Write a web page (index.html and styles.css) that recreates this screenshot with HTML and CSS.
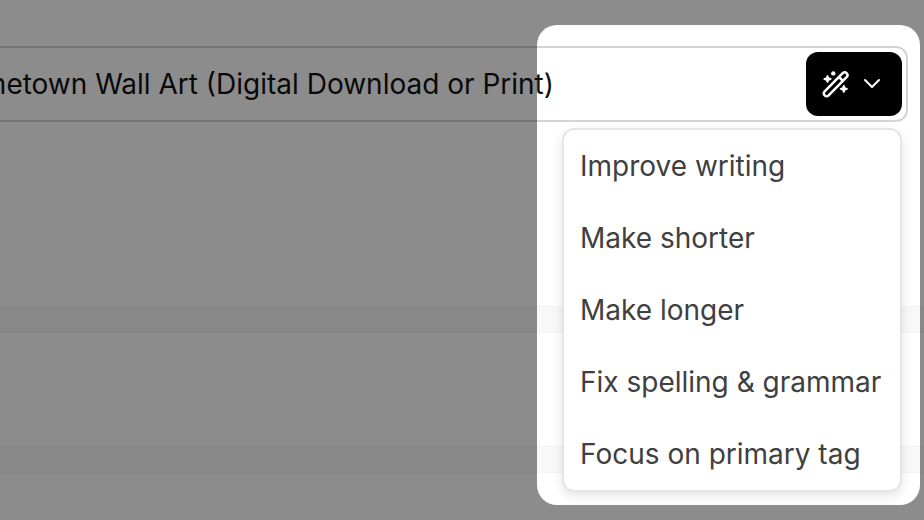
FILE: index.html
```html
<!DOCTYPE html>
<html lang="en">
<head>
  <meta charset="UTF-8">
  <meta name="viewport" content="width=device-width, initial-scale=1.0">
  <title>Edit listing title</title>
  <link rel="stylesheet" href="styles.css">
</head>
<body>
  <main class="page">
    <section class="card card-title">
      <div class="field">
        <input class="field-input" type="text" aria-label="Title" value="Hometown Wall Art (Digital Download or Print)">
        <button class="ai-button" type="button" aria-label="Writing tools" aria-haspopup="menu" aria-expanded="true">
          <svg class="icon-wand" viewBox="0 0 28 28" aria-hidden="true">
            <path stroke-width="2.5" d="M2.7 21.4 20.7 3.2a2.7 2.7 0 0 1 3.9 3.9L6.6 25.3a2.7 2.7 0 0 1-3.9-3.9zM17 7l3.8 3.8"/>
            <path class="spark" d="M5.5 5.7 6.6 8l2.3 1-2.3 1-1.1 2.3L4.4 10 2.1 9l2.3-1zM21.8 15.6l1.1 2.3 2.3 1-2.3 1-1.1 2.3-1.1-2.3-2.3-1 2.3-1z"/>
            <circle cx="11.3" cy="3.4" r="2.2"/>
          </svg>
          <svg class="icon-chevron" viewBox="0 0 20 20" aria-hidden="true">
            <path stroke-width="2" d="m3 6 7 7 7-7"/>
          </svg>
        </button>
        <div class="menu" role="menu">
          <button class="menu-item" type="button" role="menuitem">Improve writing</button>
          <button class="menu-item" type="button" role="menuitem">Make shorter</button>
          <button class="menu-item" type="button" role="menuitem">Make longer</button>
          <button class="menu-item" type="button" role="menuitem">Fix spelling &amp; grammar</button>
          <button class="menu-item" type="button" role="menuitem">Focus on primary tag</button>
        </div>
      </div>
    </section>
    <section class="card card-middle"></section>
    <section class="card card-last"></section>
  </main>
  <div class="spotlight"></div>
</body>
</html>
```

FILE: styles.css
```css
* {
  box-sizing: border-box;
}

body {
  margin: 0;
  overflow: hidden;
  background: #f8f8f8;
  font-family: Inter, "Liberation Sans", sans-serif;
  font-size: 28px;
}

button,
input {
  font: inherit;
}

.page {
  display: flex;
  flex-direction: column;
  gap: 27px;
  min-height: 100vh;
}

.card {
  background: #fff;
  box-shadow: 0 0 0 1px #f4f4f4;
}

.card-title {
  min-height: 306px;
  padding: 46px 16px 0 0;
}

.card-middle {
  min-height: 113px;
}

.card-last {
  flex: 1;
}

/* the field starts left of the visible area */
.field {
  position: relative;
  display: flex;
  align-items: center;
  margin-left: -100px;
  padding: 4px;
  border: 2px solid #d4d4d4;
  border-radius: 12px;
  background: #fff;
}

.field-input {
  flex: 1;
  min-width: 0;
  padding: 0 252px 0 0;
  border: 0;
  outline: 0;
  background: transparent;
  color: #111;
  text-align: right;
}

.ai-button {
  display: flex;
  align-items: center;
  justify-content: space-between;
  width: 96px;
  height: 64px;
  padding: 0 20px 0 16px;
  border: 0;
  border-radius: 12px;
  background: #000;
  color: #fff;
}

.ai-button svg {
  fill: none;
  stroke: currentColor;
  stroke-linecap: round;
  stroke-linejoin: round;
}

.icon-wand {
  width: 28px;
  height: 28px;
}

.icon-wand circle {
  fill: currentColor;
  stroke: none;
}

.icon-wand .spark {
  fill: currentColor;
  stroke-width: 1.4;
}

.icon-chevron {
  width: 20px;
  height: 20px;
}

.menu {
  position: absolute;
  top: 80px;
  right: 4px;
  display: flex;
  flex-direction: column;
  width: 340px;
  border: 2px solid #e5e5e5;
  border-radius: 12px;
  background: #fff;
  box-shadow: 0 4px 12px rgba(0, 0, 0, 0.1);
}

.menu-item {
  height: 72px;
  padding: 0 16px;
  border: 0;
  background: transparent;
  color: #404040;
  text-align: left;
  white-space: nowrap;
}

/* dims everything outside the highlighted box */
.spotlight {
  position: absolute;
  top: 25px;
  right: 4px;
  width: 383px;
  height: 480px;
  border-radius: 20px;
  box-shadow: 0 0 0 2000px rgba(0, 0, 0, 0.45);
  pointer-events: none;
}
```
